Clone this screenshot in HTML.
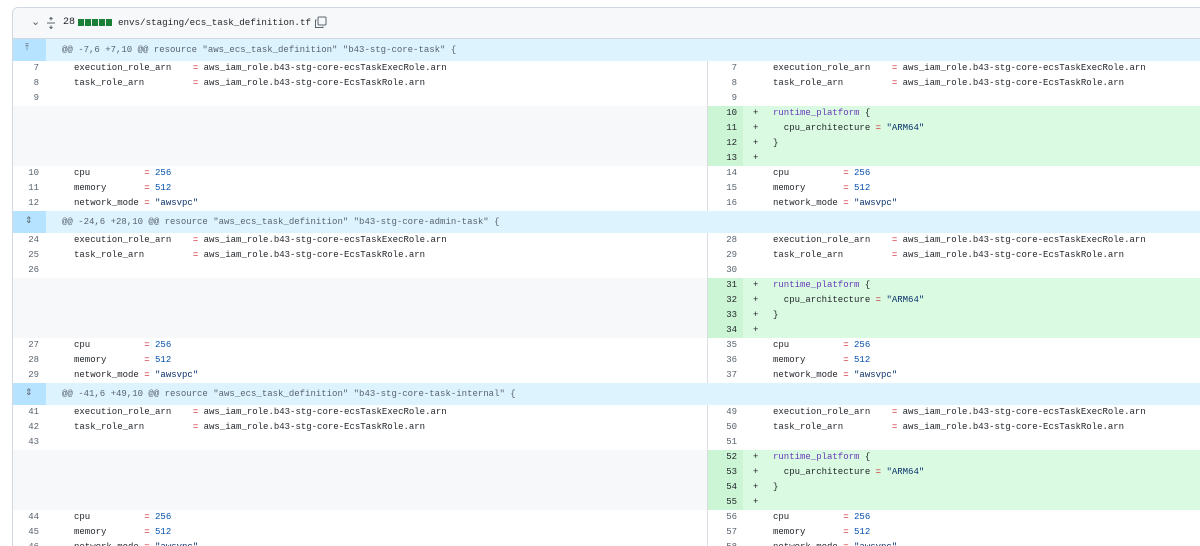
<!DOCTYPE html>
<html><head><meta charset="utf-8"><style>
*{margin:0;padding:0;box-sizing:border-box}
html,body{width:1200px;height:546px;overflow:hidden}
body{background:#fff;font-family:"Liberation Mono",monospace;font-size:9px;color:#1f2328;position:relative}
.box{position:absolute;left:12px;top:7px;width:1200px;height:539px;border:1px solid #d0d7de;border-bottom:none;border-radius:6px 0 0 0;overflow:hidden}
.hdr{height:31px;background:#f6f8fa;border-bottom:1px solid #d0d7de;position:relative}
.hdr span{position:absolute;top:9px}
.row{height:15px;line-height:15px;position:relative;white-space:pre}
.hunk{height:22px;line-height:22px;background:#ddf4ff;position:relative;white-space:pre;color:#59636e}
.hunk .ex{position:absolute;left:0;top:0;width:33px;height:22px;background:#b6e3ff}
.hunk .t{position:absolute;left:49px}
.ln{position:absolute;width:26px;left:0;text-align:right;color:#59636e}
.lc{position:absolute;left:61px}
.rn{position:absolute;left:694px;width:38px;text-align:right;color:#59636e;padding-right:8px}
.rp{position:absolute;left:740px}
.rc{position:absolute;left:760px}
.div{position:absolute;left:694px;top:0;width:1px;height:100%;background:#d8dee4}
.addbg{position:absolute;left:695px;right:0;top:0;bottom:0;background:#dafbe1}
.addn{position:absolute;left:695px;width:35px;top:0;bottom:0;background:#ccf5d5}
.blank{position:absolute;left:0;width:694px;top:0;bottom:0;background:#f6f8fa}
.op{color:#cf222e}.nm{color:#0550ae}.s{color:#0a3069}.kw{color:#6639ba}
.rn.a{color:#1f2328}
</style></head><body>
<div class="box">
<div class="hdr">
<span style="left:18px;top:7px;font-family:'DejaVu Sans';font-size:11px;color:#59636e">⌄</span>
<svg style="position:absolute;left:33px;top:9px" width="10" height="12" viewBox="0 0 10 12"><path d="M1 6h8M5 0v3.5M3.5 2L5 .5 6.5 2M5 12V8.5M3.5 10L5 11.5 6.5 10" stroke="#59636e" fill="none" stroke-width="1"/></svg>
<span style="left:50px;font-size:10px">28</span>
<span style="left:65px;top:11px;width:34px;height:7px;background:repeating-linear-gradient(90deg,#1a7f37 0 6px,transparent 6px 7px)"></span>
<span style="left:105px;font-size:9.2px">envs/staging/ecs_task_definition.tf</span>
<svg style="position:absolute;left:301px;top:8px" width="13" height="13" viewBox="0 0 13 13"><rect x="4" y="1" width="8" height="8" rx="1" fill="none" stroke="#59636e"/><path d="M2.5 4H1.5v7.5h7.5v-1" fill="none" stroke="#59636e"/></svg>
</div>

<div class="hunk"><div class="ex"></div><span style="position:absolute;left:12px;top:-2px;color:#59636e">⤒</span><span class="t">@@ -7,6 +7,10 @@ resource "aws_ecs_task_definition" "b43-stg-core-task" {</span></div>
<div class="row"><div class="div"></div><span class="ln">7</span><span class="lc">execution_role_arn    <span class="op">=</span> aws_iam_role.b43-stg-core-ecsTaskExecRole.arn</span><span class="rn">7</span><span class="rc">execution_role_arn    <span class="op">=</span> aws_iam_role.b43-stg-core-ecsTaskExecRole.arn</span></div>
<div class="row"><div class="div"></div><span class="ln">8</span><span class="lc">task_role_arn         <span class="op">=</span> aws_iam_role.b43-stg-core-EcsTaskRole.arn</span><span class="rn">8</span><span class="rc">task_role_arn         <span class="op">=</span> aws_iam_role.b43-stg-core-EcsTaskRole.arn</span></div>
<div class="row"><div class="div"></div><span class="ln">9</span><span class="rn">9</span></div>
<div class="row"><div class="blank"></div><div class="addbg"></div><div class="addn"></div><div class="div"></div><span class="rn a">10</span><span class="rp">+</span><span class="rc"><span class="kw">runtime_platform</span> {</span></div>
<div class="row"><div class="blank"></div><div class="addbg"></div><div class="addn"></div><div class="div"></div><span class="rn a">11</span><span class="rp">+</span><span class="rc">  cpu_architecture <span class="op">=</span> <span class="s">"ARM64"</span></span></div>
<div class="row"><div class="blank"></div><div class="addbg"></div><div class="addn"></div><div class="div"></div><span class="rn a">12</span><span class="rp">+</span><span class="rc">}</span></div>
<div class="row"><div class="blank"></div><div class="addbg"></div><div class="addn"></div><div class="div"></div><span class="rn a">13</span><span class="rp">+</span></div>
<div class="row"><div class="div"></div><span class="ln">10</span><span class="lc">cpu          <span class="op">=</span> <span class="nm">256</span></span><span class="rn">14</span><span class="rc">cpu          <span class="op">=</span> <span class="nm">256</span></span></div>
<div class="row"><div class="div"></div><span class="ln">11</span><span class="lc">memory       <span class="op">=</span> <span class="nm">512</span></span><span class="rn">15</span><span class="rc">memory       <span class="op">=</span> <span class="nm">512</span></span></div>
<div class="row"><div class="div"></div><span class="ln">12</span><span class="lc">network_mode <span class="op">=</span> <span class="s">"awsvpc"</span></span><span class="rn">16</span><span class="rc">network_mode <span class="op">=</span> <span class="s">"awsvpc"</span></span></div>

<div class="hunk"><div class="ex"></div><span style="position:absolute;left:12px;top:-1px;color:#59636e">⇕</span><span class="t">@@ -24,6 +28,10 @@ resource "aws_ecs_task_definition" "b43-stg-core-admin-task" {</span></div>
<div class="row"><div class="div"></div><span class="ln">24</span><span class="lc">execution_role_arn    <span class="op">=</span> aws_iam_role.b43-stg-core-ecsTaskExecRole.arn</span><span class="rn">28</span><span class="rc">execution_role_arn    <span class="op">=</span> aws_iam_role.b43-stg-core-ecsTaskExecRole.arn</span></div>
<div class="row"><div class="div"></div><span class="ln">25</span><span class="lc">task_role_arn         <span class="op">=</span> aws_iam_role.b43-stg-core-EcsTaskRole.arn</span><span class="rn">29</span><span class="rc">task_role_arn         <span class="op">=</span> aws_iam_role.b43-stg-core-EcsTaskRole.arn</span></div>
<div class="row"><div class="div"></div><span class="ln">26</span><span class="rn">30</span></div>
<div class="row"><div class="blank"></div><div class="addbg"></div><div class="addn"></div><div class="div"></div><span class="rn a">31</span><span class="rp">+</span><span class="rc"><span class="kw">runtime_platform</span> {</span></div>
<div class="row"><div class="blank"></div><div class="addbg"></div><div class="addn"></div><div class="div"></div><span class="rn a">32</span><span class="rp">+</span><span class="rc">  cpu_architecture <span class="op">=</span> <span class="s">"ARM64"</span></span></div>
<div class="row"><div class="blank"></div><div class="addbg"></div><div class="addn"></div><div class="div"></div><span class="rn a">33</span><span class="rp">+</span><span class="rc">}</span></div>
<div class="row"><div class="blank"></div><div class="addbg"></div><div class="addn"></div><div class="div"></div><span class="rn a">34</span><span class="rp">+</span></div>
<div class="row"><div class="div"></div><span class="ln">27</span><span class="lc">cpu          <span class="op">=</span> <span class="nm">256</span></span><span class="rn">35</span><span class="rc">cpu          <span class="op">=</span> <span class="nm">256</span></span></div>
<div class="row"><div class="div"></div><span class="ln">28</span><span class="lc">memory       <span class="op">=</span> <span class="nm">512</span></span><span class="rn">36</span><span class="rc">memory       <span class="op">=</span> <span class="nm">512</span></span></div>
<div class="row"><div class="div"></div><span class="ln">29</span><span class="lc">network_mode <span class="op">=</span> <span class="s">"awsvpc"</span></span><span class="rn">37</span><span class="rc">network_mode <span class="op">=</span> <span class="s">"awsvpc"</span></span></div>

<div class="hunk"><div class="ex"></div><span style="position:absolute;left:12px;top:-1px;color:#59636e">⇕</span><span class="t">@@ -41,6 +49,10 @@ resource "aws_ecs_task_definition" "b43-stg-core-task-internal" {</span></div>
<div class="row"><div class="div"></div><span class="ln">41</span><span class="lc">execution_role_arn    <span class="op">=</span> aws_iam_role.b43-stg-core-ecsTaskExecRole.arn</span><span class="rn">49</span><span class="rc">execution_role_arn    <span class="op">=</span> aws_iam_role.b43-stg-core-ecsTaskExecRole.arn</span></div>
<div class="row"><div class="div"></div><span class="ln">42</span><span class="lc">task_role_arn         <span class="op">=</span> aws_iam_role.b43-stg-core-EcsTaskRole.arn</span><span class="rn">50</span><span class="rc">task_role_arn         <span class="op">=</span> aws_iam_role.b43-stg-core-EcsTaskRole.arn</span></div>
<div class="row"><div class="div"></div><span class="ln">43</span><span class="rn">51</span></div>
<div class="row"><div class="blank"></div><div class="addbg"></div><div class="addn"></div><div class="div"></div><span class="rn a">52</span><span class="rp">+</span><span class="rc"><span class="kw">runtime_platform</span> {</span></div>
<div class="row"><div class="blank"></div><div class="addbg"></div><div class="addn"></div><div class="div"></div><span class="rn a">53</span><span class="rp">+</span><span class="rc">  cpu_architecture <span class="op">=</span> <span class="s">"ARM64"</span></span></div>
<div class="row"><div class="blank"></div><div class="addbg"></div><div class="addn"></div><div class="div"></div><span class="rn a">54</span><span class="rp">+</span><span class="rc">}</span></div>
<div class="row"><div class="blank"></div><div class="addbg"></div><div class="addn"></div><div class="div"></div><span class="rn a">55</span><span class="rp">+</span></div>
<div class="row"><div class="div"></div><span class="ln">44</span><span class="lc">cpu          <span class="op">=</span> <span class="nm">256</span></span><span class="rn">56</span><span class="rc">cpu          <span class="op">=</span> <span class="nm">256</span></span></div>
<div class="row"><div class="div"></div><span class="ln">45</span><span class="lc">memory       <span class="op">=</span> <span class="nm">512</span></span><span class="rn">57</span><span class="rc">memory       <span class="op">=</span> <span class="nm">512</span></span></div>
<div class="row"><div class="div"></div><span class="ln">46</span><span class="lc">network_mode <span class="op">=</span> <span class="s">"awsvpc"</span></span><span class="rn">58</span><span class="rc">network_mode <span class="op">=</span> <span class="s">"awsvpc"</span></span></div>
</div>
</body></html>
